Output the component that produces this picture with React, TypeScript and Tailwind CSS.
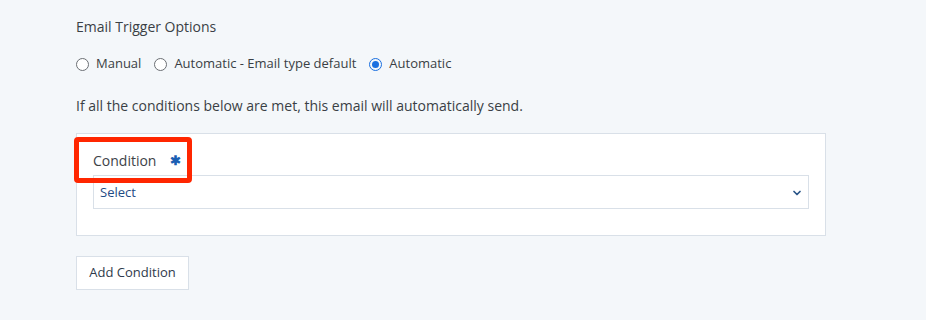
import { ChevronDown } from "lucide-react";

export default function App() {
  const options = [
    { label: "Manual", checked: false },
    { label: "Automatic - Email type default", checked: false },
    { label: "Automatic", checked: true },
  ];

  return (
    <div className="h-[320px] w-full bg-[#f4f7fa] pl-[76px] pt-[17px] text-[14px] text-[#3a3f45] font-['Open_Sans',sans-serif]">
      <div className="leading-[20px]">Email Trigger Options</div>

      {/* Trigger radios */}
      <div className="mt-[17px] flex items-center h-[20px] text-[13px]">
        {options.map(o => (
          <label key={o.label} className="flex items-center mr-[13px]">
            {o.checked ? (
              <span className="w-[13px] h-[13px] rounded-full border border-[#1a6fe0] flex items-center justify-center mr-[7px]">
                <span className="w-[7px] h-[7px] rounded-full bg-[#1a6fe0]" />
              </span>
            ) : (
              <span className="w-[13px] h-[13px] rounded-full border border-[#6b6f74] bg-white mr-[7px]" />
            )}
            <span>{o.label}</span>
          </label>
        ))}
      </div>

      <p className="mt-[22px] leading-[20px]">If all the conditions below are met, this email will automatically send.</p>

      {/* Conditions panel */}
      <div className="relative mt-[17px] w-[750px] h-[103px] bg-white border border-[#d9e0e8] px-[16px] pt-[16px]">
        <div className="flex items-center h-[20px] text-[#3d4247]">
          <span>Condition</span>
          <span className="ml-[14px] text-[#1b5fb3] text-[13px] font-bold leading-none">✱</span>
        </div>
        <div className="mt-[5px] h-[34px] border border-[#d9e0e8] flex items-center justify-between pl-[6px] pr-[5px] pt-[1px]">
          <span className="text-[13px] text-[#1e4b85]">Select</span>
          <ChevronDown size={12} strokeWidth={3.5} className="text-[#2b5689]" />
        </div>
        <div className="absolute left-[-3px] top-[3px] w-[118px] h-[46px] border-[5px] border-[#ff2600] rounded-[4px]" />
      </div>

      <button className="mt-[20px] h-[34px] w-[113px] bg-white border border-[#d9e0e8] text-[#2e3a4b] text-[13px]">
        Add Condition
      </button>
    </div>
  );
}
